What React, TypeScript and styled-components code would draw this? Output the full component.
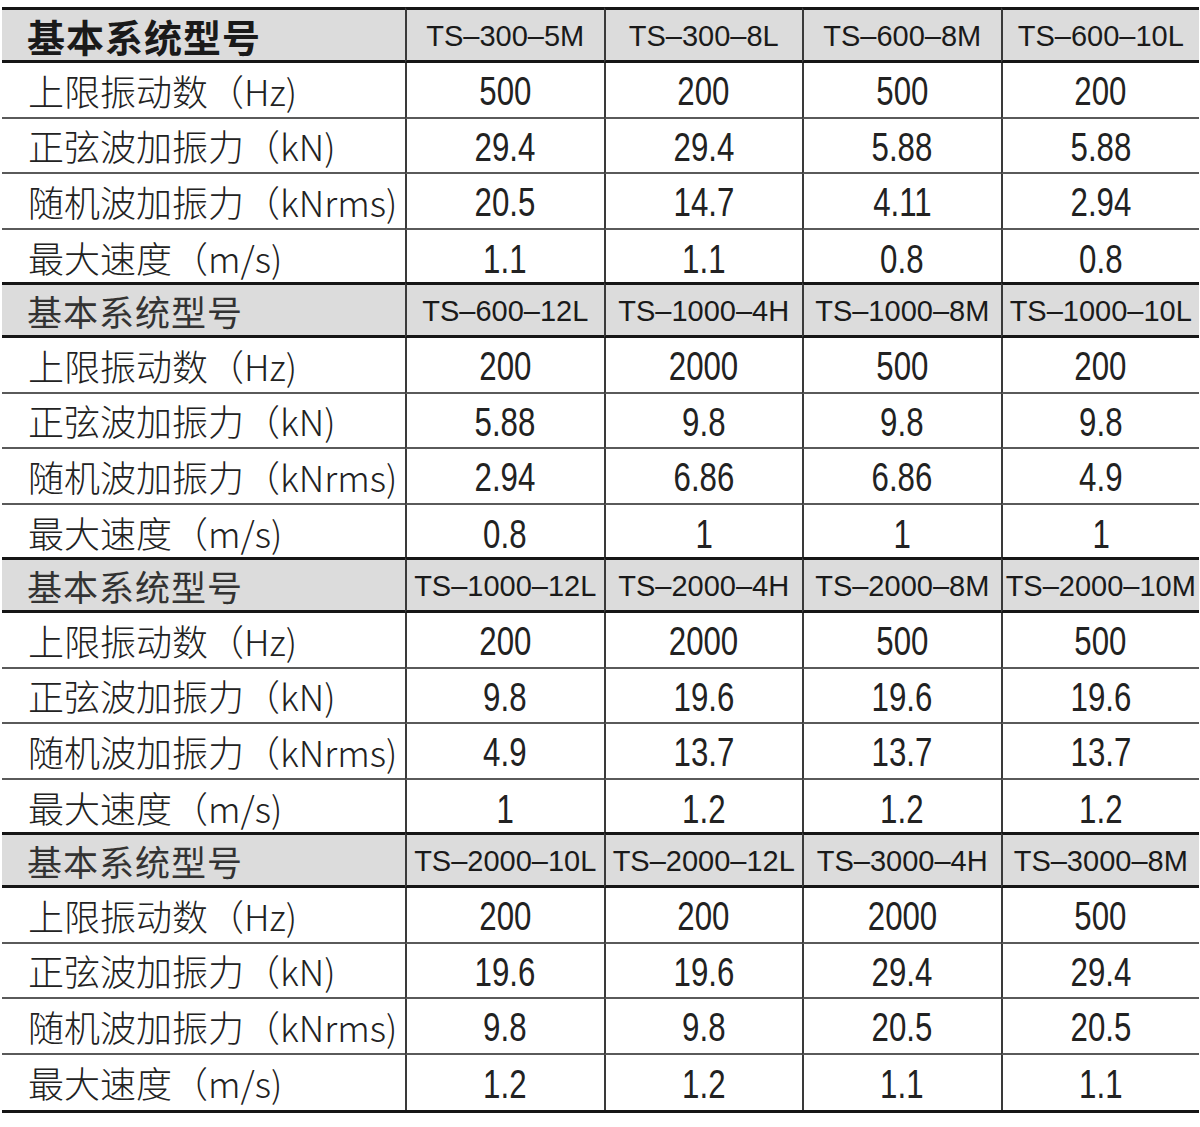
import React from "react";
import styled, { createGlobalStyle } from "styled-components";

const GlobalStyle = createGlobalStyle`
  * {
    margin: 0;
    padding: 0;
    box-sizing: border-box;
  }

  body {
    background-color: #fff;
    color: #1c1c1c;
    font-family: "Liberation Sans", "Noto Sans CJK SC", sans-serif;
  }
`;

type Section = {
  models: string[];
  rows: string[][];
};

const labels = [
  "上限振动数（Hz)",
  "正弦波加振力（kN)",
  "随机波加振力（kNrms)",
  "最大速度（m/s)",
];

const sections: Section[] = [
  {
    models: ["TS–300–5M", "TS–300–8L", "TS–600–8M", "TS–600–10L"],
    rows: [
      ["500", "200", "500", "200"],
      ["29.4", "29.4", "5.88", "5.88"],
      ["20.5", "14.7", "4.11", "2.94"],
      ["1.1", "1.1", "0.8", "0.8"],
    ],
  },
  {
    models: ["TS–600–12L", "TS–1000–4H", "TS–1000–8M", "TS–1000–10L"],
    rows: [
      ["200", "2000", "500", "200"],
      ["5.88", "9.8", "9.8", "9.8"],
      ["2.94", "6.86", "6.86", "4.9"],
      ["0.8", "1", "1", "1"],
    ],
  },
  {
    models: ["TS–1000–12L", "TS–2000–4H", "TS–2000–8M", "TS–2000–10M"],
    rows: [
      ["200", "2000", "500", "500"],
      ["9.8", "19.6", "19.6", "19.6"],
      ["4.9", "13.7", "13.7", "13.7"],
      ["1", "1.2", "1.2", "1.2"],
    ],
  },
  {
    models: ["TS–2000–10L", "TS–2000–12L", "TS–3000–4H", "TS–3000–8M"],
    rows: [
      ["200", "200", "2000", "500"],
      ["19.6", "19.6", "29.4", "29.4"],
      ["9.8", "9.8", "20.5", "20.5"],
      ["1.2", "1.2", "1.1", "1.1"],
    ],
  },
];

const Page = styled.div`
  padding: 7px 1px 0 2px;
  width: 1200px;
`;

const Table = styled.div`
  display: grid;
  grid-template-columns: 403px repeat(4, 1fr);
  border-bottom: 3px solid #161616;
`;

const HeadCell = styled.div<{ $first?: boolean; $label?: boolean }>`
  height: 56px;
  display: flex;
  align-items: center;
  justify-content: ${(p) => (p.$label ? "flex-start" : "center")};
  padding-left: ${(p) => (p.$label ? "25px" : "0")};
  padding-top: ${(p) => (p.$label ? "0" : "2px")};
  background-color: #dcdcdc;
  border-top: 3px solid #161616;
  border-bottom: 3px solid #161616;
  border-left: ${(p) => (p.$label ? "none" : "2px solid #3a3a3a")};
  margin-top: ${(p) => (p.$first ? "0" : "-3px")};
  white-space: nowrap;
  overflow: hidden;
`;

const SectionTitle = styled.span<{ $first?: boolean }>`
  font-family: "Noto Sans CJK SC", sans-serif;
  font-size: ${(p) => (p.$first ? "38px" : "35px")};
  font-weight: ${(p) => (p.$first ? 700 : 400)};
  color: ${(p) => (p.$first ? "#1a1a1a" : "#333")};
  letter-spacing: 1px;
`;

const Model = styled.span`
  font-family: "Liberation Sans", sans-serif;
  font-size: 29px;
  color: #1a1a1a;
`;

const LabelCell = styled.div<{ $last?: boolean }>`
  height: 55.5px;
  display: flex;
  align-items: center;
  padding-left: 26px;
  border-bottom: ${(p) => (p.$last ? "none" : "2px solid #5a5a5a")};
  white-space: nowrap;
`;

const LabelText = styled.span`
  font-family: "Noto Sans CJK SC", sans-serif;
  font-size: 36px;
  font-weight: 300;
  color: #222;
`;

const ValueCell = styled.div<{ $last?: boolean }>`
  height: 55.5px;
  display: flex;
  align-items: center;
  justify-content: center;
  padding-top: 4px;
  border-left: 2px solid #3a3a3a;
  border-bottom: ${(p) => (p.$last ? "none" : "2px solid #5a5a5a")};
`;

const Value = styled.span`
  display: inline-block;
  font-family: "Liberation Sans", sans-serif;
  font-size: 40px;
  color: #222;
  transform: scaleX(0.78);
`;

function App() {
  return (
    <Page>
      <GlobalStyle />
      <Table>
        {sections.map((section, si) => (
          <React.Fragment key={si}>
            <HeadCell $label $first={si === 0}>
              <SectionTitle $first={si === 0}>基本系统型号</SectionTitle>
            </HeadCell>
            {section.models.map((m) => (
              <HeadCell key={m} $first={si === 0}>
                <Model>{m}</Model>
              </HeadCell>
            ))}
            {section.rows.map((row, ri) => (
              <React.Fragment key={ri}>
                <LabelCell $last={ri === 3}>
                  <LabelText>{labels[ri]}</LabelText>
                </LabelCell>
                {row.map((v, ci) => (
                  <ValueCell key={ci} $last={ri === 3}>
                    <Value>{v}</Value>
                  </ValueCell>
                ))}
              </React.Fragment>
            ))}
          </React.Fragment>
        ))}
      </Table>
    </Page>
  );
}

export default App;
